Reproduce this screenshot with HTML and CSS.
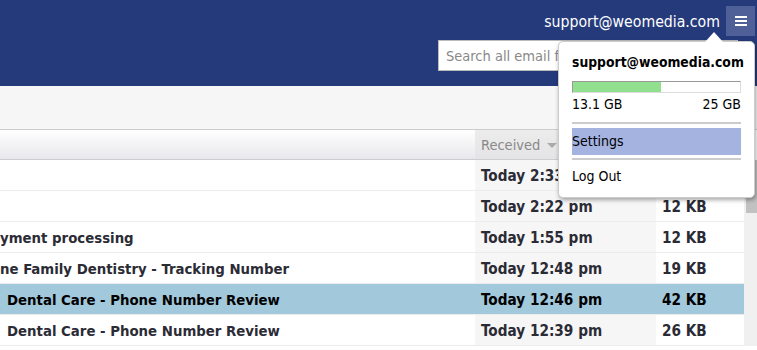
FILE: index.html
```html
<!doctype html>
<html lang="en">
<head>
  <meta charset="utf-8">
  <title>Webmail</title>
  <link rel="stylesheet" href="styles.css">
</head>
<body>

<header class="topbar">
  <div class="account">
    <span class="account-email">support@weomedia.com</span>
    <span class="menu-button">
      <svg width="12" height="12" viewBox="0 0 12 12"><path d="M0 2h12M0 6h12M0 10h12" stroke="#fff" stroke-width="2"/></svg>
    </span>
  </div>
  <input class="search" type="text" placeholder="Search all email folders">
</header>

<div class="toolbar"></div>

<div class="mail-list">
  <table class="messages">
    <colgroup>
      <col class="col-subject">
      <col class="col-received">
      <col class="col-size">
    </colgroup>
    <thead>
      <tr>
        <th></th>
        <th class="sorted">Received <span class="sort-arrow"></span></th>
        <th></th>
      </tr>
    </thead>
    <tbody>
      <tr><td class="subject"></td><td class="received">Today 2:33 pm</td><td>8 KB</td></tr>
      <tr><td class="subject"></td><td class="received">Today 2:22 pm</td><td>12 KB</td></tr>
      <tr><td class="subject">yment processing</td><td class="received">Today 1:55 pm</td><td>12 KB</td></tr>
      <tr><td class="subject">ne Family Dentistry - Tracking Number</td><td class="received">Today 12:48 pm</td><td>19 KB</td></tr>
      <tr class="selected"><td class="subject indent">Dental Care - Phone Number Review</td><td class="received">Today 12:46 pm</td><td>42 KB</td></tr>
      <tr><td class="subject indent">Dental Care - Phone Number Review</td><td class="received">Today 12:39 pm</td><td>26 KB</td></tr>
    </tbody>
  </table>
  <div class="scrollbar"><div class="scroll-thumb"></div></div>
</div>

<div class="account-menu">
  <div class="menu-email">support@weomedia.com</div>
  <div class="quota"><div class="quota-used" style="width: 52.4%"></div></div>
  <div class="quota-text"><span>13.1 GB</span><span>25 GB</span></div>
  <div class="menu-item active">Settings</div>
  <div class="menu-item">Log Out</div>
</div>

</body>
</html>
```

FILE: styles.css
```css
:root {
  --navy: #253a7b;
  --navy-light: #4f5f98;
  --text-color: #2b2b35;
  --row-border: #ececec;
  --sorted-bg: #f6f6f6;
  --selected-bg: #a2c8dc;
}
html {
  font-family: "DejaVu Sans Condensed", "DejaVu Sans", sans-serif;
  font-stretch: condensed;
  font-size: 14px;
}
body {
  margin: 0;
  overflow: hidden;
  color: var(--text-color);
}
.topbar {
  height: 86px;
  background-color: var(--navy);
  padding-top: 6px;
  box-sizing: border-box;
}
.account {
  display: flex;
  justify-content: flex-end;
  align-items: center;
  height: 30px;
  padding-right: 2px;
}
.account-email {
  color: #fff;
  font-size: 15.7px;
  margin-right: 6px;
}
.menu-button {
  display: flex;
  align-items: center;
  justify-content: center;
  width: 29px;
  height: 30px;
  background-color: var(--navy-light);
}
.search {
  display: block;
  margin: 4px 0 0 438px;
  width: 300px;
  height: 31px;
  box-sizing: border-box;
  border: 1px solid #bbb;
  padding: 0 7px;
  font-family: inherit;
  font-size: 14.5px;
  outline: none;
}
.search::placeholder {
  color: #888;
}
.toolbar {
  height: 43px;
  background-color: #f6f6f6;
  border-bottom: 1px solid #cdcdcd;
}
.mail-list {
  display: flex;
}
.messages {
  width: 744px;
  border-collapse: collapse;
  table-layout: fixed;
}
col.col-subject {
  width: 475px;
}
col.col-received {
  width: 181px;
}
.messages th {
  height: 29px;
  padding: 0 6px;
  text-align: left;
  font-weight: normal;
  color: #888;
  font-size: 14.5px;
  background: linear-gradient(#fff, #e8e8ec);
  border-bottom: 1px solid #cdcdcd;
}
.messages th.sorted {
  background: linear-gradient(#ececec, #e4e4e6);
}
.sort-arrow {
  display: inline-block;
  vertical-align: middle;
  margin-left: 3px;
  border: 5px solid transparent;
  border-bottom: 0;
  border-top: 5px solid #aaa;
}
.messages td {
  padding: 7px 6px 5px;
  line-height: 18px;
  font-weight: bold;
  font-size: 15.2px;
  white-space: nowrap;
  overflow: hidden;
  border-bottom: 1px solid var(--row-border);
}
.messages td.subject {
  padding-left: 0;
  font-size: 14.8px;
}
.messages td.indent {
  padding-left: 7px;
}
.messages td.received {
  background-color: var(--sorted-bg);
}
.messages tr.selected td {
  background-color: var(--selected-bg);
  color: #000;
}
.scrollbar {
  width: 13px;
  margin-top: 30px;
  background-color: #f0f0f0;
}
.scroll-thumb {
  height: 53px;
  margin-left: 2px;
  background-color: #c1c1c1;
}
.account-menu {
  position: absolute;
  left: 558px;
  top: 41px;
  width: 197px;
  height: 157px;
  box-sizing: border-box;
  padding: 11px 13px 0;
  background-color: #fff;
  border: 1px solid #ccc;
  border-radius: 5px;
  box-shadow: 1px 2px 4px rgba(0, 0, 0, 0.35);
  color: #000;
}
.account-menu:before {
  content: "";
  position: absolute;
  top: -10px;
  left: 146px;
  border: 9px solid transparent;
  border-top: 0;
  border-bottom: 10px solid #fff;
}
.menu-email {
  font-weight: bold;
  font-size: 13.8px;
  line-height: 18px;
  margin-bottom: 10px;
}
.quota {
  height: 10px;
  border: 1px solid #ddd;
  border-top-color: #999;
  border-left-color: #999;
}
.quota-used {
  height: 100%;
  background-color: #90e090;
}
.quota-text {
  display: flex;
  justify-content: space-between;
  font-size: 14px;
  line-height: 17px;
  padding: 3px 0 9px;
  border-bottom: 2px solid #ccc;
}
.menu-item {
  font-size: 14px;
  padding: 5px 0;
  margin-top: 4px;
  line-height: 17px;
}
.menu-item.active {
  background-color: #a4b3e0;
  box-shadow: 0 3px 0 #fff, 0 5px 0 #ccc;
  margin-bottom: 8px;
}
```
